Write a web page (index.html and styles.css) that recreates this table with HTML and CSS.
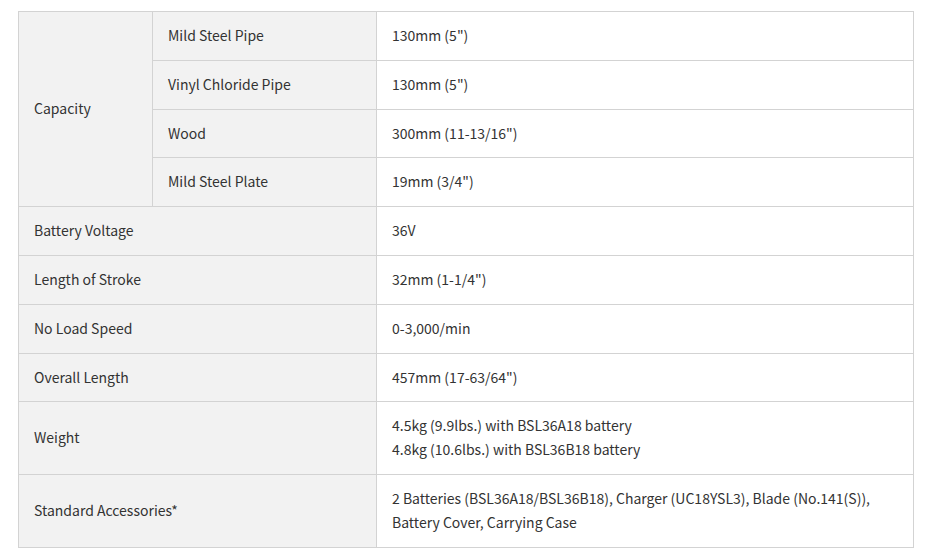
FILE: index.html
```html
<!DOCTYPE html>
<html>
<head>
<meta charset="utf-8">
<link rel="stylesheet" href="styles.css">
</head>
<body>
<div class="wrap">
<table class="spec">
  <colgroup>
    <col class="c1"><col class="c2"><col class="c3">
  </colgroup>
  <tbody>
    <tr><th rowspan="4">Capacity</th><th>Mild Steel Pipe</th><td>130mm (5")</td></tr>
    <tr><th>Vinyl Chloride Pipe</th><td>130mm (5")</td></tr>
    <tr><th>Wood</th><td>300mm (11-13/16")</td></tr>
    <tr><th>Mild Steel Plate</th><td>19mm (3/4")</td></tr>
    <tr><th colspan="2">Battery Voltage</th><td>36V</td></tr>
    <tr><th colspan="2">Length of Stroke</th><td>32mm (1-1/4")</td></tr>
    <tr><th colspan="2">No Load Speed</th><td>0-3,000/min</td></tr>
    <tr><th colspan="2">Overall Length</th><td>457mm (17-63/64")</td></tr>
    <tr><th colspan="2">Weight</th><td>4.5kg (9.9lbs.) with BSL36A18 battery<br>4.8kg (10.6lbs.) with BSL36B18 battery</td></tr>
    <tr><th colspan="2">Standard Accessories*</th><td>2 Batteries (BSL36A18/BSL36B18), Charger (UC18YSL3), Blade (No.141(S)),<br>Battery Cover, Carrying Case</td></tr>
  </tbody>
</table>
</div>
</body>
</html>
```

FILE: styles.css
```css
html, body {
  margin: 0;
  padding: 0;
  background: #ffffff;
}
.wrap {
  padding: 11px 0 0 18px;
}
.spec {
  border-collapse: collapse;
  width: 895px;
  table-layout: fixed;
  font-family: "Noto Sans CJK JP", "Source Sans Pro", "Liberation Sans", sans-serif;
  font-size: 14px;
  color: #333333;
}
.c1 { width: 134px; }
.c2 { width: 224px; }
.c3 { width: 537px; }
.spec th, .spec td {
  border: 1px solid #d3d3d3;
  padding: 12px 15px;
  line-height: 1.7;
  text-align: left;
  vertical-align: middle;
  font-weight: 400;
}
.spec th {
  background: #f2f2f2;
}
.spec td {
  background: #ffffff;
}
```
